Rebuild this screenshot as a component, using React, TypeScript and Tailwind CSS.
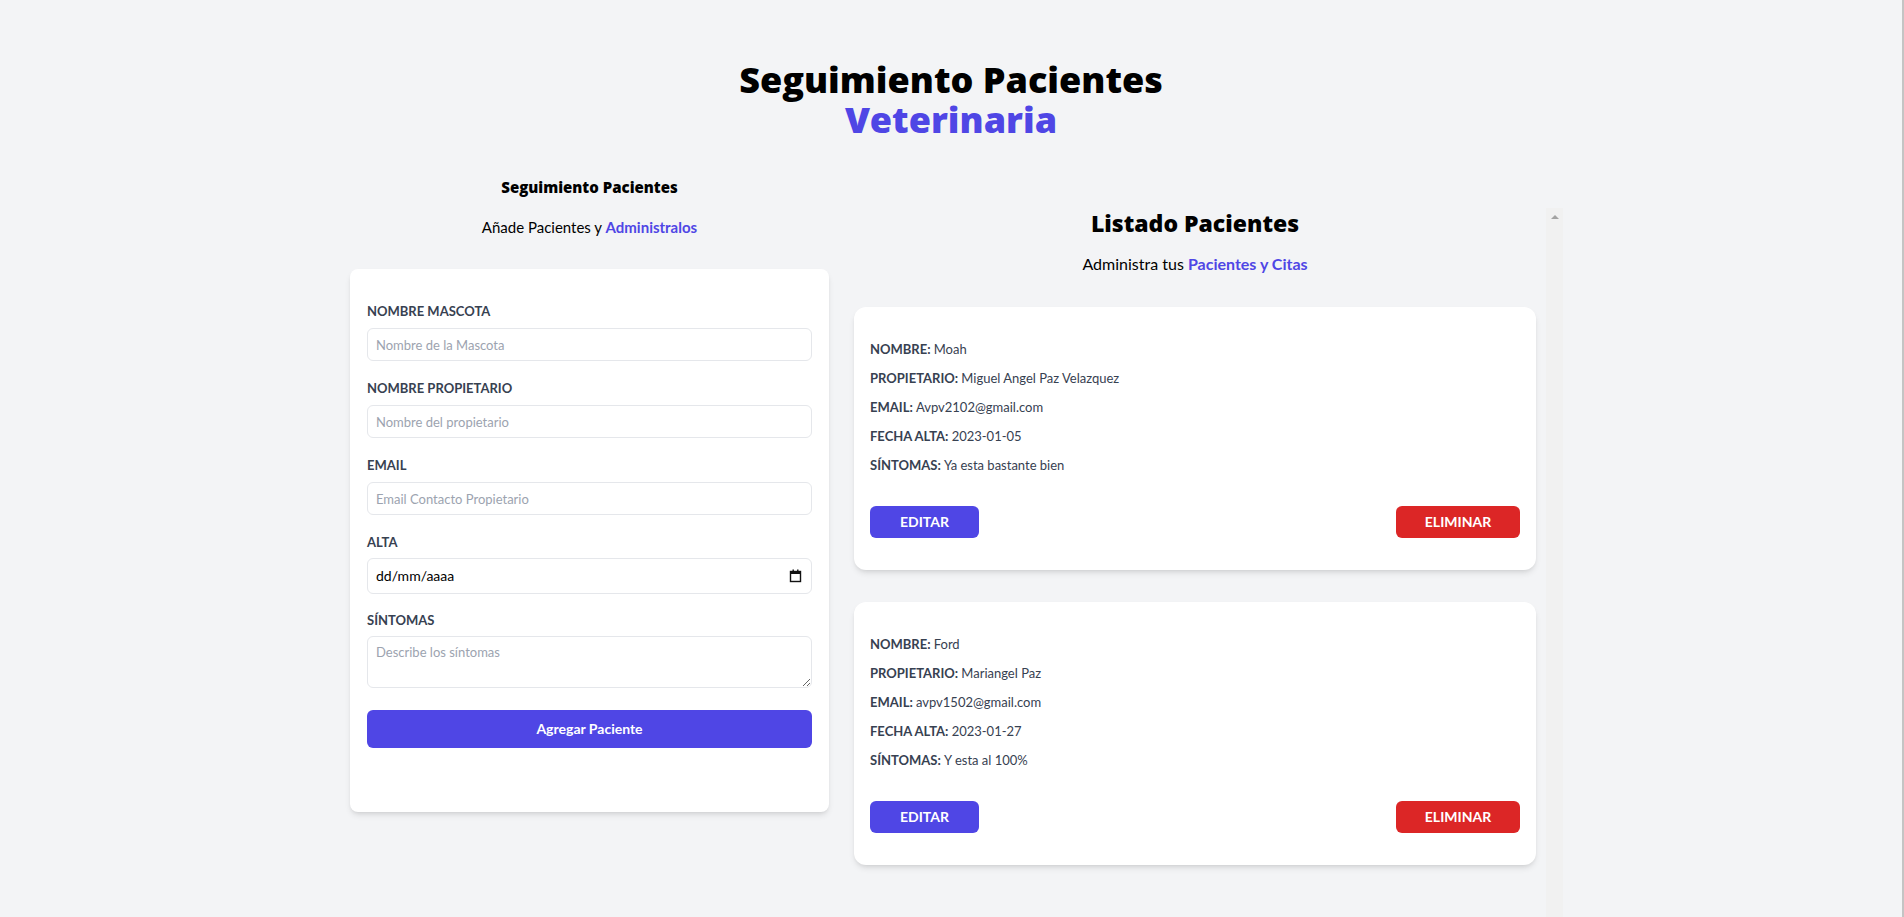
import React from "react";

const pacientes = [
  {
    nombre: "Moah",
    propietario: "Miguel Angel Paz Velazquez",
    email: "Avpv2102@gmail.com",
    fecha: "2023-01-05",
    sintomas: "Ya esta bastante bien",
  },
  {
    nombre: "Ford",
    propietario: "Mariangel Paz",
    email: "avpv1502@gmail.com",
    fecha: "2023-01-27",
    sintomas: "Y esta al 100%",
  },
];

function Field({ label, children }: { label: string; children: React.ReactNode }) {
  return (
    <div className="mb-[17px]">
      <label className="block text-[13px] leading-5 font-bold uppercase text-[#374151]">{label}</label>
      {children}
    </div>
  );
}

function CalendarIcon() {
  return (
    <svg width="13" height="14" viewBox="0 0 13 14" fill="none">
      <rect x="1.5" y="2.5" width="10" height="10" stroke="#111" strokeWidth="1.4" fill="none" />
      <rect x="1" y="2" width="11" height="3" fill="#111" />
      <rect x="3.5" y="0.5" width="1.4" height="2.5" fill="#111" />
      <rect x="8.1" y="0.5" width="1.4" height="2.5" fill="#111" />
    </svg>
  );
}

function Paciente({ p, last }: { p: (typeof pacientes)[number]; last?: boolean }) {
  const rows: [string, string][] = [
    ["Nombre", p.nombre],
    ["Propietario", p.propietario],
    ["Email", p.email],
    ["Fecha Alta", p.fecha],
    ["Síntomas", p.sintomas],
  ];
  return (
    <div className={`bg-white rounded-xl shadow-md px-4 py-8 ${last ? "" : "mb-8"}`}>
      {rows.map(([k, v], i) => (
        <p key={k} className={`text-[13px] leading-5 font-bold uppercase text-[#374151] ${i < 4 ? "mb-[9px]" : ""}`}>
          {k}: <span className="font-normal normal-case text-[#374151]">{v}</span>
        </p>
      ))}
      <div className="flex justify-between mt-[31px]">
        <button className="w-[109px] h-8 rounded-md bg-[#4f46e5] text-white text-sm font-bold uppercase">
          Editar
        </button>
        <button className="w-[124px] h-8 rounded-md bg-[#dc2626] text-white text-sm font-bold uppercase">
          Eliminar
        </button>
      </div>
    </div>
  );
}

const inputCls =
  "mt-[7px] block w-full h-[33px] px-2 text-[13px] border border-[#e5e7eb] rounded-md placeholder-[#9ca3af] outline-none bg-white";

export default function App() {
  return (
    <div className="h-[917px] overflow-hidden bg-[#f3f4f6] border-r-2 border-[#c4c4c4] font-['Lato',sans-serif] text-black">
      <h1 className="pt-[60px] text-center text-4xl leading-10 font-black text-black font-['Open_Sans',sans-serif]">
        Seguimiento Pacientes
        <br />
        <span className="text-[#4f46e5]">Veterinaria</span>
      </h1>

      <div className="flex pl-[350px]">
        {/* Left column */}
        <div className="w-[479px] pt-[35px]">
          <h2 className="text-center text-[15px] leading-6 font-black font-['Open_Sans',sans-serif]">
            Seguimiento Pacientes
          </h2>
          <p className="mt-[18px] text-center text-[15px] leading-5">
            Añade Pacientes y <span className="font-bold text-[#4f46e5]">Administralos</span>
          </p>

          <form className="mt-8 bg-white rounded-lg shadow-md px-[17px] pt-8 pb-8">
            <Field label="Nombre Mascota">
              <input type="text" placeholder="Nombre de la Mascota" className={inputCls} />
            </Field>
            <Field label="Nombre Propietario">
              <input type="text" placeholder="Nombre del propietario" className={inputCls} />
            </Field>
            <Field label="Email">
              <input type="email" placeholder="Email Contacto Propietario" className={inputCls} />
            </Field>
            <div className="mb-4">
              <label className="block text-[13px] leading-5 font-bold uppercase text-[#374151]">Alta</label>
              <div className="mt-[6px] flex items-center justify-between w-full h-9 pl-2 pr-[9px] border border-[#e5e7eb] rounded-md bg-white">
                <span className="text-sm text-black">dd/mm/aaaa</span>
                <CalendarIcon />
              </div>
            </div>
            <div>
              <label className="block text-[13px] leading-5 font-bold uppercase text-[#374151]">Síntomas</label>
              <textarea
                placeholder="Describe los síntomas"
                className="mt-[6px] block w-full h-[52px] px-2 py-1.5 text-[13px] border border-[#e5e7eb] rounded-md placeholder-[#9ca3af] outline-none"
              />
            </div>
            <button
              type="button"
              className="mt-[22px] mb-8 w-full h-[38px] rounded-md bg-[#4f46e5] text-white text-sm font-bold"
            >
              Agregar Paciente
            </button>
          </form>
        </div>

        {/* Right column */}
        <div className="ml-[25px] mt-[68px] h-[709px] flex">
          <div className="w-[682px]">
            <h2 className="text-center text-[23px] leading-[30px] font-black font-['Open_Sans',sans-serif]">
              Listado Pacientes
            </h2>
            <p className="mt-[14px] text-center text-base leading-6">
              Administra tus <span className="font-bold text-[#4f46e5]">Pacientes y Citas</span>
            </p>
            <div className="mt-[31px]">
              {pacientes.map((p, i) => (
                <Paciente key={p.email} p={p} last={i === pacientes.length - 1} />
              ))}
            </div>
          </div>
          <div className="ml-[10px] w-[17px] bg-[#f1f1f1] flex justify-center pt-[7px]">
            <div className="w-0 h-0 border-l-[4px] border-r-[4px] border-b-[4px] border-l-transparent border-r-transparent border-b-[#a3a3a3]" />
          </div>
        </div>
      </div>
    </div>
  );
}
